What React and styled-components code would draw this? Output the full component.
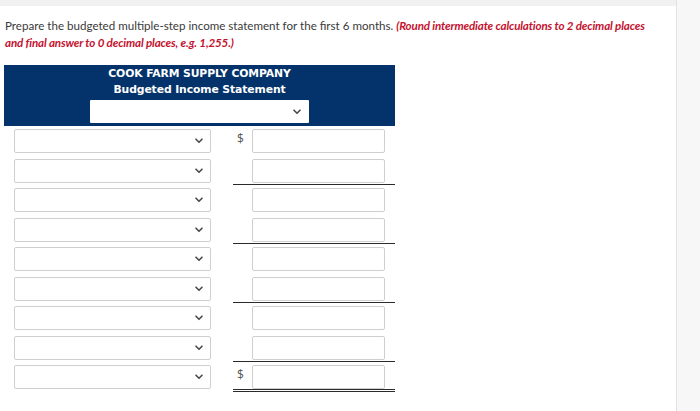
import React from 'react';
import styled, { createGlobalStyle } from 'styled-components';

const GlobalStyle = createGlobalStyle`
  html, body {
    margin: 0;
    padding: 0;
    background: #ffffff;
  }
  * {
    box-sizing: border-box;
  }
`;

// which rows get a rule under the amount column
const rows = [
  { dollar: true, rule: 'none' },
  { dollar: false, rule: 'single' },
  { dollar: false, rule: 'none' },
  { dollar: false, rule: 'single' },
  { dollar: false, rule: 'none' },
  { dollar: false, rule: 'single' },
  { dollar: false, rule: 'none' },
  { dollar: false, rule: 'single' },
  { dollar: true, rule: 'double' },
];

function Chevron() {
  return (
    <ChevronIcon width="8" height="6" viewBox="0 0 8 6">
      <polyline points="1,1.2 4,4.3 7,1.2" fill="none" stroke="#4a4a4a" strokeWidth="1.6" strokeLinecap="round" strokeLinejoin="round" />
    </ChevronIcon>
  );
}

function App() {
  return (
    <Page>
      <GlobalStyle />
      <Main>
        <TopStrip />
        <Content>
          <Prompt>
            Prepare the budgeted multiple-step income statement for the first 6 months.{' '}
            <Emphasis>
              (Round intermediate calculations to 2 decimal places and final answer to 0 decimal places, e.g. 1,255.)
            </Emphasis>
          </Prompt>

          <Statement>
            <Header>
              <Title>COOK FARM SUPPLY COMPANY</Title>
              <Title>Budgeted Income Statement</Title>
              <HeaderSelect>
                <Chevron />
              </HeaderSelect>
            </Header>

            {rows.map((row, i) => (
              <Row key={i}>
                <LabelCell>
                  <Dropdown>
                    <Chevron />
                  </Dropdown>
                </LabelCell>
                <AmountCell rule={row.rule}>
                  <Dollar>{row.dollar ? '$' : ''}</Dollar>
                  <AmountInput />
                </AmountCell>
              </Row>
            ))}
          </Statement>
        </Content>
      </Main>
      <RightRail />
    </Page>
  );
}

const Page = styled.div`
  display: flex;
  width: 700px;
  height: 411px;
  overflow: hidden;
  background: #ffffff;
`;

const Main = styled.div`
  flex: 1;
  display: flex;
  flex-direction: column;
`;

const TopStrip = styled.div`
  height: 6px;
  background: #f1f1f1;
`;

const Content = styled.div`
  padding: 11px 4px 0 4px;
`;

const Prompt = styled.p`
  margin: 0 0 14px 1px;
  font-family: Lato, "Open Sans", sans-serif;
  font-size: 11.6px;
  line-height: 17px;
  color: #3a3a3a;
  max-width: 656px;
`;

const Emphasis = styled.span`
  color: #c4122f;
  font-weight: bold;
  font-style: italic;
  letter-spacing: -0.15px;
`;

const Statement = styled.div`
  width: 391px;
`;

const Header = styled.div`
  height: 61px;
  background: #03336a;
  display: flex;
  flex-direction: column;
  align-items: center;
  padding-top: 1px;
`;

const Title = styled.div`
  font-family: "DejaVu Sans", Verdana, sans-serif;
  font-weight: bold;
  font-size: 10.8px;
  line-height: 16px;
  color: #ffffff;
  letter-spacing: -0.1px;
`;

const HeaderSelect = styled.div`
  margin-top: 2px;
  width: 219px;
  height: 23px;
  background: #ffffff;
  border-radius: 1px;
  display: flex;
  align-items: center;
  justify-content: flex-end;
  padding-right: 8px;
`;

const Row = styled.div`
  display: grid;
  grid-template-columns: 229px 162px;
  height: 29.5px;
`;

const LabelCell = styled.div`
  padding: 3px 0 0 10px;
`;

const Dropdown = styled.div`
  width: 197px;
  height: 24px;
  border: 1px solid #cfcfcf;
  border-radius: 2px;
  background: #ffffff;
  display: flex;
  align-items: center;
  justify-content: flex-end;
  padding-right: 7px;
`;

const ChevronIcon = styled.svg`
  display: block;
`;

const AmountCell = styled.div`
  display: flex;
  align-items: flex-start;
  padding-top: 3px;
  border-bottom: ${({ rule }) =>
    rule === 'double' ? '3px double #2a2a2a' : rule === 'single' ? '1px solid #2a2a2a' : 'none'};
`;

const Dollar = styled.span`
  width: 19px;
  padding: 3px 0 0 4px;
  font-family: "Open Sans", Lato, sans-serif;
  font-size: 12px;
  line-height: 14px;
  color: #555555;
`;

const AmountInput = styled.div`
  width: 133px;
  height: 24px;
  border: 1px solid #cfcfcf;
  border-radius: 2px;
  background: #ffffff;
`;

const RightRail = styled.div`
  width: 24px;
  background: #f7f7f7;
  border-left: 1px solid #e2e2e2;
`;

export default App;
